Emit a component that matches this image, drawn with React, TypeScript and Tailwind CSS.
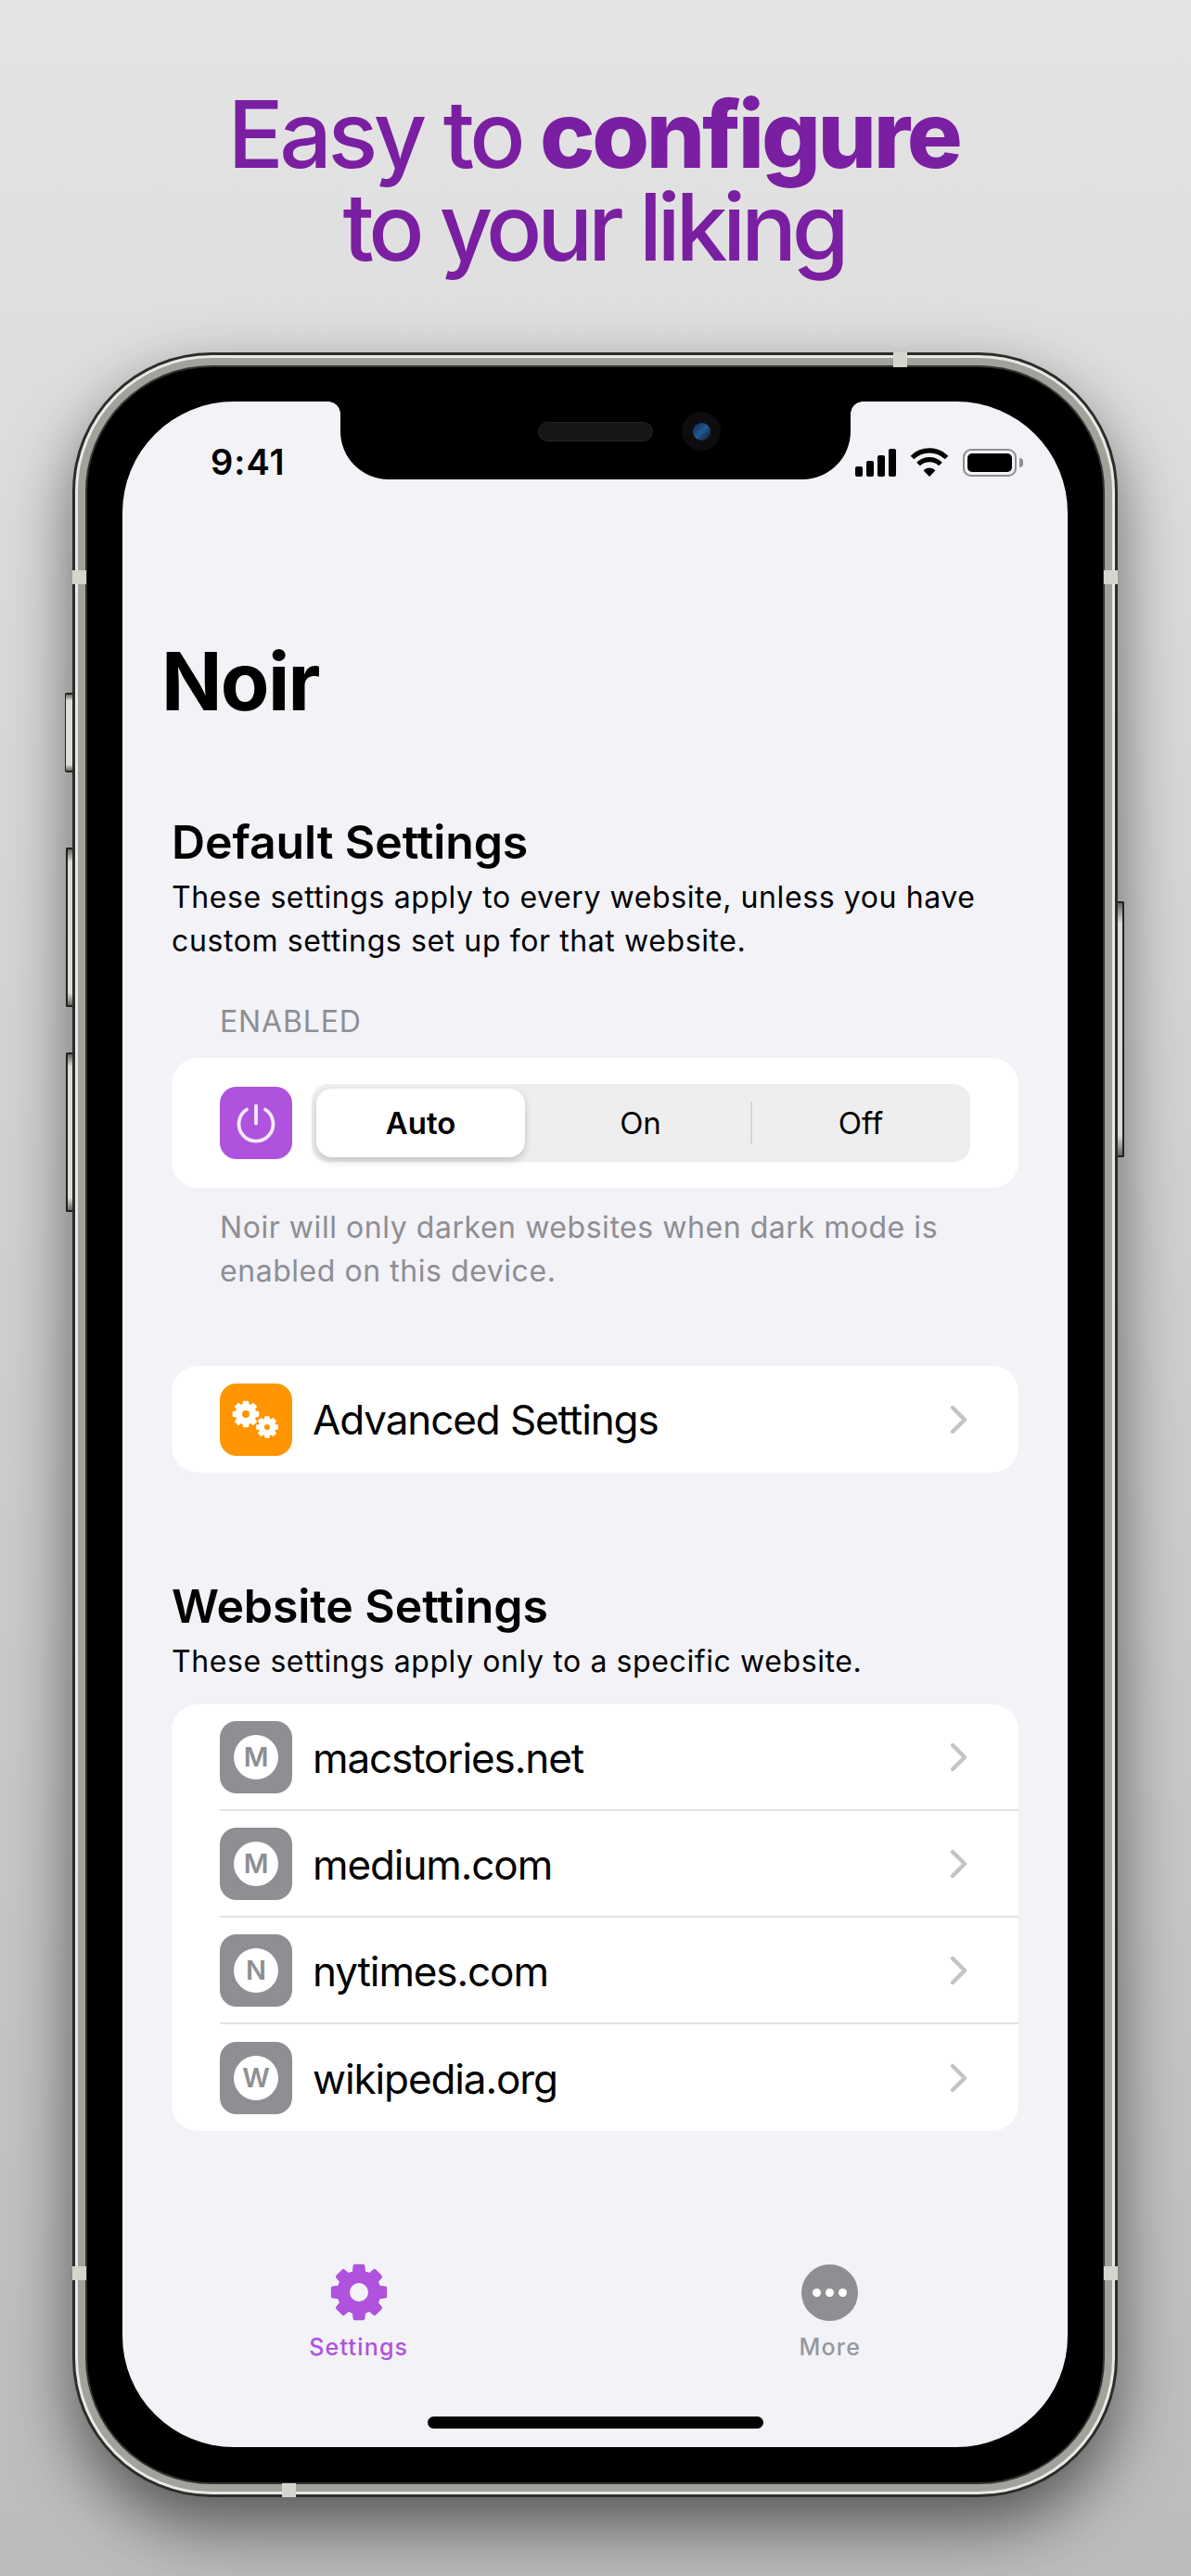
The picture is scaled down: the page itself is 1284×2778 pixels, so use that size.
// 8 tooth gear outline, stroked with round joins so the teeth come out soft
function gearPath(cx: number, cy: number, outer: number, inner: number, hole: number, teeth = 8) {
  const step = (Math.PI * 2) / teeth
  const pts: string[] = []
  for (let i = 0; i < teeth; i++) {
    const a = i * step - Math.PI / 2
    const w = step * 0.2
    const base = step * 0.3
    const p = (r: number, t: number) => `${(cx + r * Math.cos(t)).toFixed(2)} ${(cy + r * Math.sin(t)).toFixed(2)}`
    pts.push(`${i === 0 ? 'M' : 'L'}${p(inner, a - base)}`, `L${p(outer, a - w)}`, `L${p(outer, a + w)}`, `L${p(inner, a + base)}`)
  }
  const ring = `M${cx - hole} ${cy}a${hole} ${hole} 0 1 0 ${hole * 2} 0a${hole} ${hole} 0 1 0 ${-hole * 2} 0Z`
  return `${pts.join('')}Z${ring}`
}

function PowerIcon() {
  return (
    <svg viewBox="0 0 78 78" className="h-[78px] w-[78px]" fill="none" stroke="#f6eafc" strokeWidth="3.8" strokeLinecap="round">
      <path d="M39 20.5v19" />
      <path d="M29 24.5a18.5 18.5 0 1 0 20 0" />
    </svg>
  )
}

function GearsIcon() {
  return (
    <svg viewBox="0 0 78 78" className="h-[78px] w-[78px]" fill="#fff" fillRule="evenodd">
      <path d={gearPath(28, 33, 13.5, 10.5, 5)} stroke="#fff" strokeWidth="2" strokeLinejoin="round" />
      <path d={gearPath(51, 47, 11, 8.5, 4)} stroke="#fff" strokeWidth="2" strokeLinejoin="round" />
    </svg>
  )
}

function TabGear() {
  return (
    <svg viewBox="0 0 64 64" className="h-[64px] w-[64px]" fill="#af52de" fillRule="evenodd">
      <path d={gearPath(32, 32, 28.5, 22, 12)} stroke="#af52de" strokeWidth="4" strokeLinejoin="round" />
    </svg>
  )
}

function WifiIcon() {
  return (
    <svg viewBox="0 0 42 31" className="h-[31px] w-[42px]" fill="none" stroke="#000" strokeWidth="5.2">
      <path d="M2.5 10.5a26.5 26.5 0 0 1 37 0" />
      <path d="M9 17.5a17 17 0 0 1 24 0" />
      <path d="M21 31l-6.5-6.7a9 9 0 0 1 13 0Z" fill="#000" stroke="none" />
    </svg>
  )
}

function StatusIcons() {
  return (
    <div className="flex items-center">
      <div className="flex h-[30px] items-end gap-[4px]">
        <span className="h-[11px] w-[8px] rounded-[2px] bg-black" />
        <span className="h-[17px] w-[8px] rounded-[2px] bg-black" />
        <span className="h-[23px] w-[8px] rounded-[2px] bg-black" />
        <span className="h-[30px] w-[8px] rounded-[2px] bg-black" />
      </div>
      <div className="ml-[15px]">
        <WifiIcon />
      </div>
      <div className="ml-[15px] flex h-[30px] w-[58px] items-center justify-center rounded-[9px] border-2 border-[#8e8e93] p-[3px]">
        <span className="h-full w-full rounded-[5px] bg-black" />
      </div>
      <span className="ml-[3px] h-[10px] w-[4px] rounded-r-full bg-[#8e8e93]" />
    </div>
  )
}

function Chevron() {
  return (
    <svg viewBox="0 0 20 32" className="ml-auto h-[32px] w-[20px] shrink-0" fill="none" stroke="#c4c4c7" strokeWidth="4.4" strokeLinecap="round" strokeLinejoin="round">
      <path d="M3 3l13 13L3 29" />
    </svg>
  )
}

function SiteRow({ letter, name }: { letter: string; name: string }) {
  return (
    <div className="ml-[52px] flex h-[115px] items-center border-b-2 border-[#e2e2e4] pr-[54px] last:border-b-0">
      <div className="flex h-[78px] w-[78px] shrink-0 items-center justify-center rounded-[18px] bg-[#8e8e93]">
        <div className="flex h-[48px] w-[48px] items-center justify-center rounded-full bg-white text-[29px] font-semibold leading-none text-[#8e8e93]">
          {letter}
        </div>
      </div>
      <span className="ml-[22px] pt-[2px] text-[44px] leading-none tracking-[-1.1px] text-black">{name}</span>
      <Chevron />
    </div>
  )
}

const sites = [
  { letter: 'M', name: 'macstories.net' },
  { letter: 'M', name: 'medium.com' },
  { letter: 'N', name: 'nytimes.com' },
  { letter: 'W', name: 'wikipedia.org' },
]

// small light patches where the antenna bands cut the steel band
const bandClass = 'absolute bg-[#d4d5cd]'
const sideButton =
  'absolute border-y-2 border-[#222] bg-[linear-gradient(to_bottom,#666,#dcddd6_8%,#dcddd6_92%,#666)]'

export default function App() {
  return (
    <div
      className="flex h-[2778px] w-[1284px] flex-col items-center overflow-hidden bg-gradient-to-b from-[#e4e4e4] to-[#bcbcbc]"
      style={{ fontFamily: 'Inter, "Liberation Sans", sans-serif' }}
    >
      <h1 className="mt-[95px] flex flex-col items-center pr-[4px] text-[100px] font-medium leading-[100px] text-[#7a1fa2]">
        <span className="flex gap-[20px]">
          <span className="tracking-[-4.6px]">Easy to</span>
          <span className="font-extrabold tracking-[-3.3px]">configure</span>
        </span>
        <span className="tracking-[-5.3px]">to your liking</span>
      </h1>

      {/* Phone */}
      <div className="relative ml-[78px] mt-[85px] h-[2313px] w-[1127px] shrink-0 self-start rounded-[150px] bg-[#2c2d2a] p-[3px] shadow-[0_30px_70px_rgba(0,0,0,0.55)]">
        {/* Side buttons */}
        <span className={`${sideButton} -left-[8px] top-[367px] h-[86px] w-[8px] rounded-l-[2px] border-l border-l-[#222]`} />
        <span className={`${sideButton} -left-[7px] top-[534px] h-[172px] w-[7px] rounded-l-[2px] border-l-2 border-l-[#222]`} />
        <span className={`${sideButton} -left-[7px] top-[755px] h-[172px] w-[7px] rounded-l-[2px] border-l-2 border-l-[#222]`} />
        <span className={`${sideButton} -right-[7px] top-[592px] h-[276px] w-[7px] rounded-r-[2px] border-r-2 border-r-[#222]`} />

        <div className="h-full w-full rounded-[147px] bg-[#e8e9e4] p-[3px]">
          <div className="h-full w-full rounded-[144px] bg-[#a1a29b] p-[8px]">
            <div className="h-full w-full rounded-[136px] bg-[#33342f] p-[2px]">
              <div className="h-full w-full rounded-[134px] bg-black px-[38px] pb-[38px] pt-[37px]">
                {/* Screen */}
                <div className="relative flex h-full w-full flex-col rounded-[120px] bg-[#f2f2f7] px-[53px]">
                  {/* Notch */}
                  <div className="absolute left-[235px] top-0 h-[84px] w-[550px] rounded-b-[52px] bg-black">
                    <span className="absolute -left-[13px] top-0 h-[13px] w-[13px] bg-[radial-gradient(circle_at_0_100%,transparent_12.5px,black_13px)]" />
                    <span className="absolute -right-[13px] top-0 h-[13px] w-[13px] bg-[radial-gradient(circle_at_100%_100%,transparent_12.5px,black_13px)]" />
                    <div className="absolute left-[213px] top-[22px] h-[21px] w-[124px] rounded-full border border-[#262626] bg-[#161616]" />
                    <div className="absolute left-[368px] top-[11px] flex h-[42px] w-[42px] items-center justify-center rounded-full bg-[#0d0d10]">
                      <div className="h-[19px] w-[19px] rounded-full bg-gradient-to-br from-[#10284a] via-[#1f5a8f] to-[#0b1a2c]" />
                    </div>
                  </div>

                  {/* Status bar */}
                  <div className="flex h-[130px] items-start justify-between pl-[42px] pt-[50px]">
                    <span className="text-[38px] font-semibold leading-[30px] tracking-[1px] text-black">9:41</span>
                    <div className="-mr-[5px]">
                      <StatusIcons />
                    </div>
                  </div>

                  <div className="-ml-[11px] mt-[122px] text-[86px] font-bold leading-[100px] tracking-[-1.7px] text-black">Noir</div>

                  <h2 className="mt-[95px] text-[50px] font-semibold leading-[56px] tracking-[-0.1px] text-black">Default Settings</h2>
                  <p className="mt-[8px] text-[32px] leading-[47px] tracking-[0.6px] text-black">
                    These settings apply to every website, unless you have
                    <br />
                    custom settings set up for that website.
                  </p>

                  <div className="ml-[52px] mt-[44px] text-[32px] leading-[40px] tracking-[0.85px] text-[#8e8e93]">ENABLED</div>

                  {/* Enabled card */}
                  <div className="mt-[19px] flex h-[140px] items-center rounded-[28px] bg-white pl-[52px]">
                    <div className="h-[78px] w-[78px] shrink-0 rounded-[18px] bg-[#af52de]">
                      <PowerIcon />
                    </div>
                    <div className="relative ml-[21px] flex h-[84px] w-[710px] items-center rounded-[18px] bg-[#eeeeef] p-[5px]">
                      <div className="flex h-[74px] w-[225px] items-center justify-center rounded-[17px] bg-white pt-[2px] text-[33px] font-semibold text-black shadow-[0_4px_8px_rgba(0,0,0,0.18)]">
                        Auto
                      </div>
                      <div className="flex flex-1 items-center justify-center pl-[6px] pt-[2px] text-[33px] text-black">On</div>
                      <span className="h-[46px] w-[2px] bg-[#d6d6d8]" />
                      <div className="flex w-[230px] items-center justify-center pl-[4px] pt-[2px] text-[33px] text-black">Off</div>
                    </div>
                  </div>

                  <p className="ml-[52px] mt-[19px] text-[32px] leading-[47px] tracking-[0.55px] text-[#8e8e93]">
                    Noir will only darken websites when dark mode is
                    <br />
                    enabled on this device.
                  </p>

                  {/* Advanced */}
                  <div className="mt-[79px] flex h-[115px] items-center rounded-[28px] bg-white pl-[52px] pr-[54px]">
                    <div className="h-[78px] w-[78px] shrink-0 rounded-[18px] bg-[#ff9500]">
                      <GearsIcon />
                    </div>
                    <span className="ml-[22px] text-[44px] leading-none tracking-[-1.1px] text-black">Advanced Settings</span>
                    <Chevron />
                  </div>

                  <h2 className="mt-[116px] text-[50px] font-semibold leading-[56px] tracking-[-0.1px] text-black">Website Settings</h2>
                  <p className="mt-[8px] text-[32px] leading-[47px] tracking-[0.6px] text-black">
                    These settings apply only to a specific website.
                  </p>

                  <div className="mt-[23px] rounded-[28px] bg-white">
                    {sites.map((s) => (
                      <SiteRow key={s.name} letter={s.letter} name={s.name} />
                    ))}
                  </div>

                  {/* Tab bar */}
                  <div className="mt-auto -mx-[53px] grid grid-cols-2 justify-items-center">
                    <div className="flex flex-col items-center">
                      <TabGear />
                      <span className="mt-[11px] text-[25px] font-medium leading-[32px] tracking-[1.2px] text-[#af52de]">Settings</span>
                    </div>
                    <div className="flex flex-col items-center pr-[3px]">
                      <div className="flex h-[64px] items-center">
                        <div className="flex h-[61px] w-[61px] items-center justify-center gap-[5px] rounded-full bg-[#8e8e93]">
                          <span className="h-[9px] w-[9px] rounded-full bg-white" />
                          <span className="h-[9px] w-[9px] rounded-full bg-white" />
                          <span className="h-[9px] w-[9px] rounded-full bg-white" />
                        </div>
                      </div>
                      <span className="mt-[11px] text-[25px] font-medium leading-[32px] tracking-[1.2px] text-[#98989d]">More</span>
                    </div>
                  </div>
                  <div className="mb-[20px] mt-[59px] h-[13px] w-[362px] self-center rounded-full bg-black" />
                </div>
              </div>
            </div>
          </div>
        </div>

        {/* Antenna bands */}
        <span className={`${bandClass} left-0 top-[235px] h-[15px] w-[15px]`} />
        <span className={`${bandClass} right-0 top-[235px] h-[15px] w-[15px]`} />
        <span className={`${bandClass} left-[885px] top-0 h-[16px] w-[15px]`} />
        <span className={`${bandClass} bottom-0 left-[226px] h-[15px] w-[15px]`} />
        <span className={`${bandClass} left-0 top-[2064px] h-[15px] w-[15px]`} />
        <span className={`${bandClass} right-0 top-[2064px] h-[15px] w-[15px]`} />
      </div>
    </div>
  )
}
